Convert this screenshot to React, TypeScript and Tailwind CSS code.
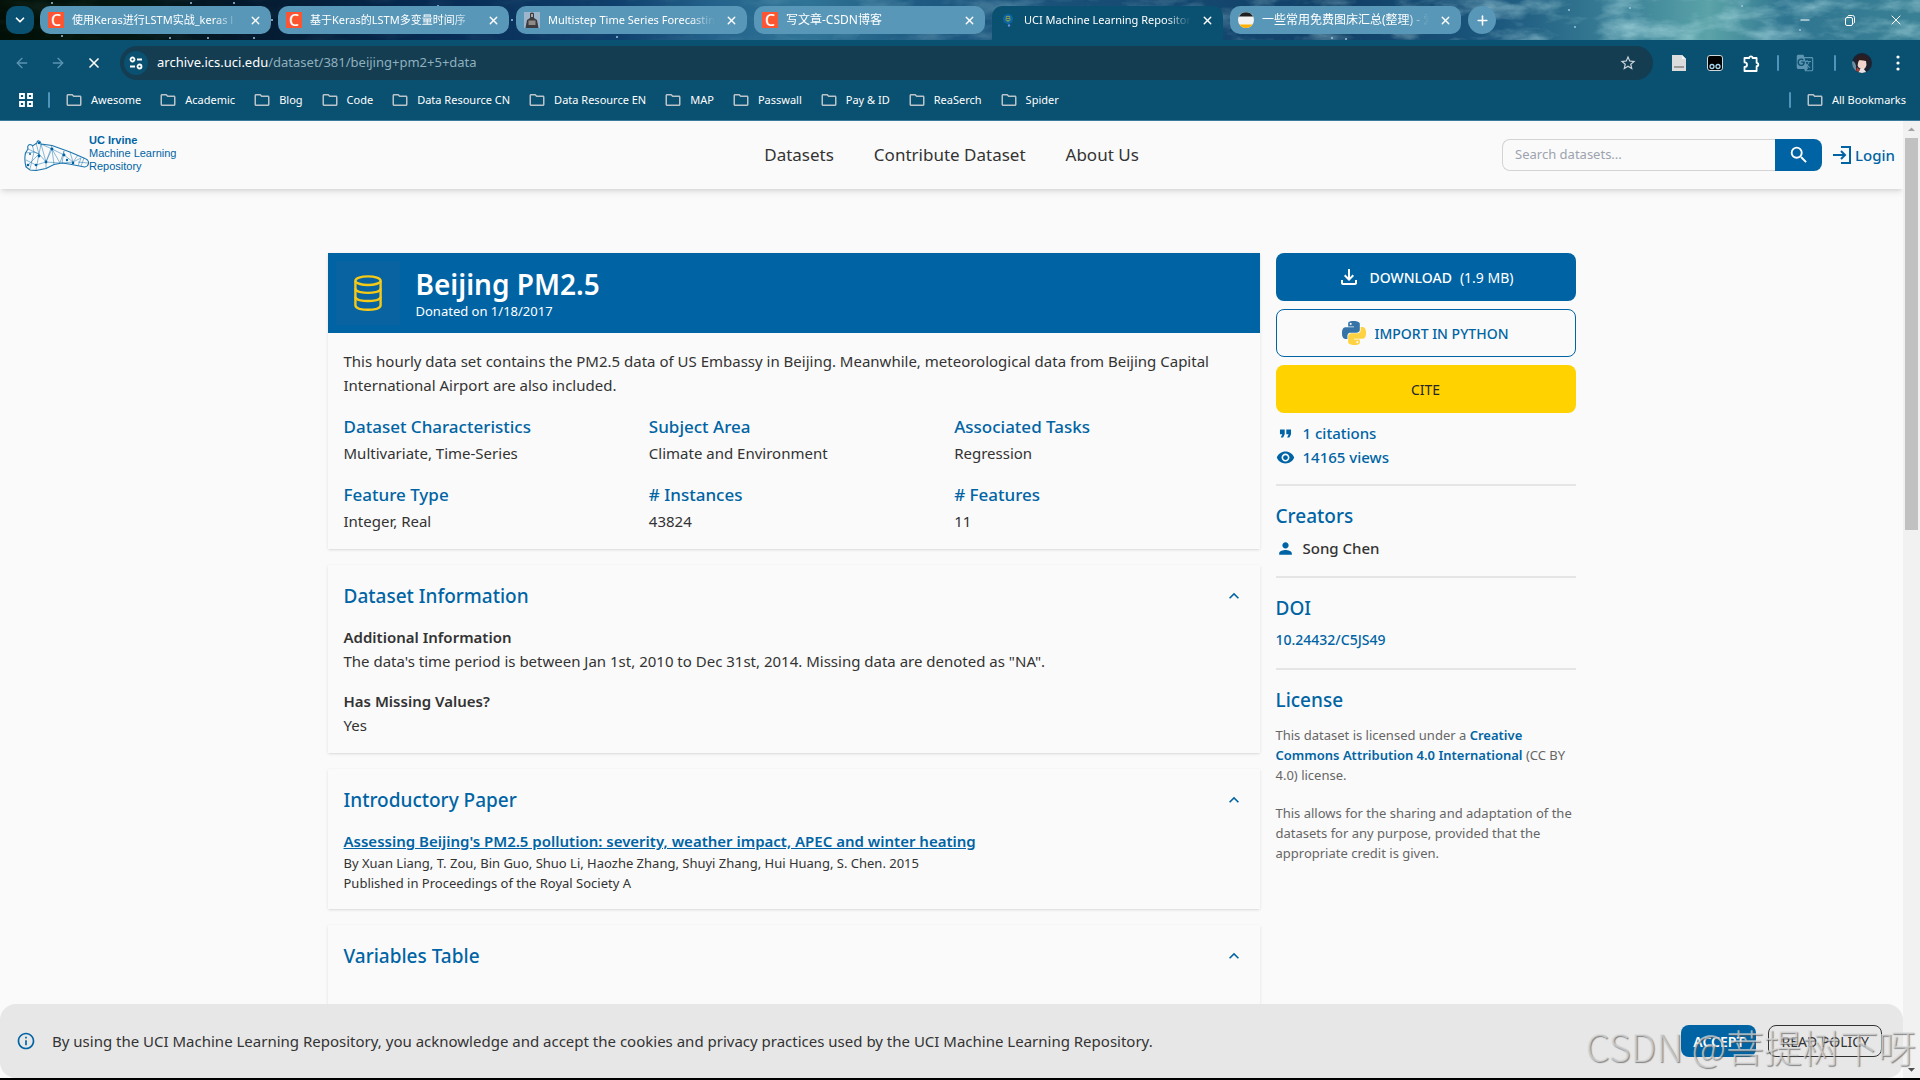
import React from 'react';
import {
  MdArrowDropDown,
  MdArrowDropUp,
  MdFormatQuote,
  MdGTranslate,
  MdKeyboardArrowUp,
  MdOutlineFileDownload,
  MdOutlineFolder,
  MdOutlineInfo,
  MdPerson,
  MdSearch,
  MdStarOutline,
  MdVisibility
} from 'react-icons/md';
import { ArrowLeft, ArrowRight, ChevronDown, Minus, Plus, X } from 'lucide-react';

type Favicon = 'csdn' | 'statue' | 'uci' | 'penguin';

interface Tab {
  id: number;
  title: string;
  icon: Favicon;
  size: string;
  active?: boolean;
}

const tabs: Tab[] = [
  { id: 1, title: '使用Keras进行LSTM实战_keras l', icon: 'csdn', size: 'text-[11px]' },
  { id: 2, title: '基于Keras的LSTM多变量时间序', icon: 'csdn', size: 'text-[11px]' },
  { id: 3, title: 'Multistep Time Series Forecastin', icon: 'statue', size: 'text-[11px]' },
  { id: 4, title: '写文章-CSDN博客', icon: 'csdn', size: 'text-[12px]' },
  { id: 5, title: 'UCI Machine Learning Repositor', icon: 'uci', size: 'text-[11px]', active: true },
  { id: 6, title: '一些常用免费图床汇总(整理) - 爱', icon: 'penguin', size: 'text-[12px]' }
];

const bookmarks = [
  'Awesome',
  'Academic',
  'Blog',
  'Code',
  'Data Resource CN',
  'Data Resource EN',
  'MAP',
  'Passwall',
  'Pay & ID',
  'ReaSerch',
  'Spider'
];

const navLinks = ['Datasets', 'Contribute Dataset', 'About Us'];

const facts = [
  { label: 'Dataset Characteristics', value: 'Multivariate, Time-Series' },
  { label: 'Subject Area', value: 'Climate and Environment' },
  { label: 'Associated Tasks', value: 'Regression' },
  { label: 'Feature Type', value: 'Integer, Real' },
  { label: '# Instances', value: '43824' },
  { label: '# Features', value: '11' }
];

// [x, y, radius]
const stars = [
  [52, 3, 1], [191, 3, 1], [234, 3, 1], [62, 36, 1], [170, 38, 1], [208, 38, 1], [254, 38, 1],
  [272, 20, 1], [378, 14, 1], [438, 6, 1], [512, 20, 1], [617, 37, 1], [1332, 38, 1], [1346, 39, 1],
  [1569, 10, 1], [1575, 27, 1], [1630, 8, 1], [1742, 6, 1], [1800, 30, 1]
];

function SkyBackground() {
  return (
    <svg className="absolute inset-0 h-full w-full" preserveAspectRatio="none" viewBox="0 0 1920 40" aria-hidden="true">
      <defs>
        <linearGradient id="sky">
          <stop offset="0" stopColor="#020f06" />
          <stop offset="0.06" stopColor="#03160f" />
          <stop offset="0.12" stopColor="#04182a" />
          <stop offset="0.22" stopColor="#072a52" />
          <stop offset="0.32" stopColor="#0f3f6c" />
          <stop offset="0.37" stopColor="#23618a" />
          <stop offset="0.42" stopColor="#2f7496" />
          <stop offset="0.48" stopColor="#1e5a82" />
          <stop offset="0.6" stopColor="#164a72" />
          <stop offset="0.7" stopColor="#103f66" />
          <stop offset="0.78" stopColor="#1c587e" />
          <stop offset="0.85" stopColor="#3d8499" />
          <stop offset="0.89" stopColor="#5ba3a8" />
          <stop offset="0.93" stopColor="#2f7590" />
          <stop offset="1" stopColor="#3a8095" />
        </linearGradient>
        <filter id="clouds" x="0" y="0" width="100%" height="100%">
          <feTurbulence type="fractalNoise" baseFrequency="0.02 0.05" numOctaves="5" seed="8" />
          <feColorMatrix values="0 0 0 0 0.55  0 0 0 0 0.85  0 0 0 0 0.88  1.6 0 0 0 -0.72" />
        </filter>
        <linearGradient id="cloudFade">
          <stop offset="0.3" stopColor="#fff" stopOpacity="0.1" />
          <stop offset="0.8" stopColor="#fff" stopOpacity="0.8" />
        </linearGradient>
        <mask id="cloudMask">
          <rect width="1920" height="40" fill="url(#cloudFade)" />
        </mask>
      </defs>
      <rect width="1920" height="40" fill="url(#sky)" />
      <g mask="url(#cloudMask)">
        <rect width="1920" height="40" filter="url(#clouds)" />
      </g>
      {stars.map(([x, y, r]) => (
        <circle key={`${x}-${y}`} cx={x} cy={y} r={r} fill="#9fc4dd" />
      ))}
    </svg>
  );
}

function TabIcon({ icon }: { icon: Favicon }) {
  if (icon === 'csdn') {
    return (
      <span className="flex h-4 w-4 shrink-0 items-center justify-center bg-[#fc5531] text-base leading-none font-medium text-white">
        C
      </span>
    );
  }
  if (icon === 'statue') {
    return (
      <svg className="h-4 w-4 shrink-0" viewBox="0 0 16 16" aria-hidden="true">
        <rect width="16" height="16" fill="#9db6cc" />
        <path d="M6 1.5Q8-.5 10 1.5V6l3 2 1.5 8h-13L3 8l3-2z" fill="#3b3b40" />
        <path d="M7 2h2v3H7z" fill="#a5a5a8" />
        <path d="M4.500 8.500h7v4.500h-7z" fill="#8f8a86" />
      </svg>
    );
  }
  if (icon === 'uci') {
    return (
      <svg className="h-4 w-4 shrink-0" viewBox="0 0 16 16" aria-hidden="true">
        <circle cx="8" cy="7" r="5" fill="#0d66a4" />
        <path d="M6 4h4l.5 4L8 10 5.500 8z" fill="#7d9a5a" />
        <path d="M6.500 5.500h3M6.500 7.500h3" stroke="#1d4d74" strokeWidth=".8" />
        <circle cx="9" cy="13.500" r="1.200" fill="#6b8fe0" />
      </svg>
    );
  }
  return (
    <svg className="h-4 w-4 shrink-0" viewBox="0 0 16 16" aria-hidden="true">
      <circle cx="8" cy="8" r="8" fill="#f2f2f0" />
      <path d="M.9 4.500a8 8 0 0 1 14.200 0z" fill="#1f2021" />
      <path d="M1.400 12.500a8 8 0 0 0 13.200 0z" fill="#ffb000" />
    </svg>
  );
}

function TabStrip() {
  return (
    <div className="relative h-10">
      <SkyBackground />
      <div className="relative flex h-full pl-1.5">
        <button
          type="button"
          aria-label="Search tabs"
          className="mt-1.5 flex h-7 w-7 items-center justify-center rounded-[10px] bg-[#0a5070] text-white"
        >
          <ChevronDown size={14} strokeWidth={3} />
        </button>
        <div className="ml-1.5 flex gap-[7px]">
          {tabs.map((tab) => (
            <div
              key={tab.id}
              className={
                tab.active
                  ? 'mt-1.5 flex w-[231px] items-start rounded-t-[10px] bg-[#0a5070] px-2'
                  : 'mt-1.5 flex h-7 w-[231px] items-start rounded-[10px] bg-[#5897b8] px-2'
              }
            >
              <div className="flex h-7 min-w-0 flex-1 items-center gap-2">
                <TabIcon icon={tab.icon} />
                <span
                  className={`min-w-0 flex-1 overflow-hidden mask-r-from-85% leading-4 whitespace-nowrap text-white ${tab.size}`}
                >
                  {tab.title}
                </span>
                <button type="button" aria-label="Close tab" className="flex w-4 justify-center text-white">
                  <X size={13} strokeWidth={2.5} />
                </button>
              </div>
            </div>
          ))}
        </div>
        <button
          type="button"
          aria-label="New tab"
          className="mt-1.5 ml-[7px] flex h-7 w-7 items-center justify-center rounded-full bg-[#5897b8] text-white"
        >
          <Plus size={15} strokeWidth={2.5} />
        </button>
        <div className="ml-auto flex items-center gap-8 pr-4 text-white">
          <button type="button" aria-label="Minimize">
            <Minus size={14} strokeWidth={2} />
          </button>
          <button type="button" aria-label="Restore">
            <svg width="12" height="12" viewBox="0 0 12 12" fill="none" stroke="currentColor" aria-hidden="true">
              <rect x="1.500" y="3.500" width="7" height="8" rx="1.500" />
              <path d="M3.500 2.500Q4 1.500 5 1.500h3.500a2 2 0 0 1 2 2V8q0 1-1 1.500" />
            </svg>
          </button>
          <button type="button" aria-label="Close window">
            <X size={16} strokeWidth={1.500} />
          </button>
        </div>
      </div>
    </div>
  );
}

function Toolbar() {
  return (
    <div className="flex h-[46px] items-center pr-5 pl-[14px] text-white">
      <button type="button" aria-label="Back" className="w-4 text-[#5c94b2]">
        <ArrowLeft size={16} />
      </button>
      <button type="button" aria-label="Forward" className="ml-5 w-4 text-[#5c94b2]">
        <ArrowRight size={16} />
      </button>
      <button type="button" aria-label="Stop loading" className="ml-5 w-4">
        <X size={16} strokeWidth={2.500} />
      </button>
      <div className="ml-[18px] flex h-[34px] flex-1 items-center rounded-full bg-[#143d52] pr-4 pl-1">
        <span className="flex h-6 w-6 items-center justify-center rounded-full bg-[#0a5070]">
          <svg width="14" height="14" viewBox="0 0 14 14" fill="none" stroke="currentColor" strokeWidth="1.800" aria-hidden="true">
            <circle cx="3.500" cy="3.500" r="2" />
            <path d="M8 3.500h5M1 10.500h5" />
            <circle cx="10.500" cy="10.500" r="2" />
          </svg>
        </span>
        <span className="ml-[9px] flex-1 text-[13px] text-[#8fb0be]">
          <span className="text-white">archive.ics.uci.edu</span>/dataset/381/beijing+pm2+5+data
        </span>
        <MdStarOutline size={18} className="text-[#c9d4da]" />
      </div>
      <div className="ml-4 flex items-center">
        <svg className="mx-[3px]" width="14" height="16" viewBox="0 0 14 16" aria-hidden="true">
          <path d="M0 0h10l4 4v12H0z" fill="#dcdcdc" />
          <path d="M10 0v4h4z" fill="#f6f6f6" />
          <path d="M2 11h10v2H2z" fill="#9a9a9a" />
        </svg>
        <svg className="ml-[18px]" width="16" height="16" viewBox="0 0 16 16" aria-hidden="true">
          <rect x=".5" y=".5" width="15" height="15" rx="2.500" fill="#000" stroke="#cfd8dc" />
          <circle cx="5" cy="11.500" r="2" fill="#000" stroke="#a8d8f0" strokeWidth="1.300" />
          <circle cx="11" cy="11.500" r="2" fill="#000" stroke="#a8d8f0" strokeWidth="1.300" />
        </svg>
        <svg className="ml-5" width="17" height="17" viewBox="0 0 17 17" fill="none" stroke="currentColor" strokeWidth="1.800" strokeLinejoin="round" aria-hidden="true">
          <path d="M1.500 3h4.700a1.700 1.700 0 0 1 3.400 0h4v4.800a1.700 1.700 0 0 1 0 3.400V16H1.500v-4q2.500 0 2.500-2.300T1.500 7.400z" />
        </svg>
        <span className="ml-[17px] h-4 w-0.5 rounded-full bg-[#4f95bb]" />
        <MdGTranslate size={18} className="ml-[17px] text-[#5c94b2]" />
        <span className="ml-5 h-4 w-0.5 rounded-full bg-[#4f95bb]" />
        <svg className="ml-4 rounded-full" width="20" height="20" viewBox="0 0 20 20" aria-hidden="true">
          <rect width="20" height="20" fill="#1d2230" />
          <path d="M0 8q3 0 4 5v7H0z" fill="#6d8ea0" />
          <path d="M6 8q4-3 8 0l.5 4q-1 4-4 4.500Q6 15 5.500 12z" fill="#f0d5cb" />
          <path d="M5 4q6-4 11 1l1 6-2-3-8-1-2 6z" fill="#2d1c20" />
          <path d="M8 16l3-1 4 5H6z" fill="#e9e4e4" />
          <path d="M5 14l3 3-2 2-2-1z" fill="#a3433c" />
        </svg>
        <svg className="ml-6" width="4" height="16" viewBox="0 0 4 16" fill="currentColor" aria-hidden="true">
          <circle cx="2" cy="2" r="1.600" />
          <circle cx="2" cy="8" r="1.600" />
          <circle cx="2" cy="14" r="1.600" />
        </svg>
      </div>
    </div>
  );
}

function BookmarkBar() {
  return (
    <nav className="flex h-[35px] items-center border-b border-[#3b7c9c] pb-[6px] pl-[19px] text-[11px] text-white">
      <svg width="14" height="14" viewBox="0 0 14 14" fill="none" stroke="currentColor" strokeWidth="1.800" aria-hidden="true">
        <path d="M1 1h4v4H1zM9 1h4v4H9zM1 9h4v4H1zM9 9h4v4H9z" />
      </svg>
      <span className="mx-[15px] h-4 w-0.5 rounded-full bg-[#4f95bb]" />
      <div className="flex gap-[18px]">
        {bookmarks.map((name) => (
          <a key={name} href="#" className="flex items-center gap-2 whitespace-nowrap">
            <MdOutlineFolder size={18} className="text-[#b9c3c8]" />
            {name}
          </a>
        ))}
      </div>
      <span className="mr-[15px] ml-auto h-4 w-0.5 rounded-full bg-[#4f95bb]" />
      <a href="#" className="flex items-center gap-2 pr-[14px] whitespace-nowrap">
        <MdOutlineFolder size={18} className="text-[#b9c3c8]" />
        All Bookmarks
      </a>
    </nav>
  );
}

function Logo() {
  return (
    <a href="#" className="ml-4 flex items-center">
      <svg width="65" height="31" viewBox="0 0 65 31" fill="none" stroke="#1a75ae" strokeWidth=".8" aria-hidden="true">
        <path strokeWidth="1.100" d="M2 27Q0 19 1.500 13L4 9Q3 5 6 4.500q2 0 2.500 1.500L13 3q0-2.500 2-2t2 3l11 1.500L46 12l15 6.500q4 1.500 3.500 5-.5 3-4 3.500L45 24l-7-1-8 1.500-8 4-10 2-6-.5z" />
        <path strokeWidth=".5" d="M4 9l11 5 2-10M1.500 13L10 12l5 2-3-11M15 14l-3 16M15 14L2 27M10 12L6 29M2 20l10 5 10-3M15 14l7 8M17 4l5 18 6-16.500M17 4l11 5M28 9l-6 13 14 1M28 9l8 14 4-12M40 11l-2 12 11-1M28 9l12 6M40 15l9 7-3-10M49 22l8-4M49 22l5-7M57 18l-3 8M60 18l-3 8M54 22l10 1M8.500 6l1.500 6M22 22v6M28 9l2 15.500" />
        <g fill="#0064a4" stroke="none">
          <circle cx="4" cy="25" r="1.300" />
          <circle cx="12" cy="25" r="1.300" />
          <circle cx="15" cy="16" r="1.400" />
          <circle cx="22" cy="22" r="1.400" />
          <circle cx="28" cy="9" r="1.400" />
          <circle cx="40" cy="15" r="1.400" />
          <circle cx="43" cy="20" r="1.200" />
          <circle cx="49" cy="23" r="1.300" />
          <circle cx="6" cy="14" r="1" />
          <circle cx="15" cy="3" r="1.200" />
        </g>
      </svg>
      <span className="pb-[3px] font-['Liberation_Sans',sans-serif] text-[11px] leading-[13px] text-[#0064a4]">
        <b className="block">UC Irvine</b>
        <span className="block">Machine Learning</span>
        <span className="block">Repository</span>
      </span>
    </a>
  );
}

function SiteHeader() {
  return (
    <header className="relative flex h-[68px] items-center bg-[#fafafa] px-2 shadow-md">
      <div className="flex-1">
        <Logo />
      </div>
      <nav className="flex gap-10 text-[17px] text-[#333]">
        {navLinks.map((link) => (
          <a key={link} href="#" className="whitespace-nowrap">
            {link}
          </a>
        ))}
      </nav>
      <div className="flex flex-1 items-center justify-end">
        <form className="flex h-8">
          <input
            type="text"
            aria-label="Search datasets"
            placeholder="Search datasets..."
            className="w-[273px] rounded-l-lg border border-r-0 border-[#d4d4d4] bg-transparent px-3 text-[13px] text-[#333] placeholder:text-[#9ca3af]"
          />
          <button
            type="button"
            aria-label="Search"
            className="flex w-[47px] items-center justify-center rounded-r-lg bg-[#0064a4] text-white"
          >
            <MdSearch size={22} />
          </button>
        </form>
        <a href="#" className="ml-[11px] flex items-center gap-1 text-[15px] font-medium text-[#0064a4]">
          <svg width="18" height="18" viewBox="0 0 18 18" fill="none" stroke="currentColor" strokeWidth="2" aria-hidden="true">
            <path d="M8 1h9v16H8M0 9h11M8 5l4 4-4 4" />
          </svg>
          Login
        </a>
      </div>
    </header>
  );
}

function Summary() {
  return (
    <section className="shadow">
      <div className="flex h-20 items-center bg-[#0064a4] px-2 text-white">
        <div className="flex h-16 w-16 items-center justify-center bg-[#0963a1]">
          <svg width="28" height="36" viewBox="0 0 28 36" fill="none" stroke="#f5c916" strokeWidth="2.400" aria-hidden="true">
            <ellipse cx="14" cy="5.700" rx="12.600" ry="4.300" />
            <path d="M1.400 5.700v24.600q0 2.400 4 3.500 8.600 1.800 17.200 0 4-1.100 4-3.500V5.700" />
            <path d="M1.400 13.500q0 2.300 4 3.400 8.600 1.900 17.200 0 4-1.100 4-3.400M1.400 21.700q0 2.300 4 3.400 8.600 1.900 17.200 0 4-1.100 4-3.400" />
          </svg>
        </div>
        <div className="ml-4">
          <h1 className="text-[28px] leading-9 font-semibold">Beijing PM2.5</h1>
          <h2 className="text-[13px] leading-[18px]">Donated on 1/18/2017</h2>
        </div>
      </div>
      <div className="p-4">
        <p className="leading-6">
          This hourly data set contains the PM2.5 data of US Embassy in Beijing. Meanwhile, meteorological data from Beijing
          Capital International Airport are also included.
        </p>
        <div className="mt-4 grid grid-cols-3 gap-4">
          {facts.map((fact) => (
            <div key={fact.label}>
              <h3 className="text-[17px] leading-7 font-medium text-[#0064a4]">{fact.label}</h3>
              <p className="leading-6">{fact.value}</p>
            </div>
          ))}
        </div>
      </div>
    </section>
  );
}

function Panel({ title, children }: { title: string; children?: React.ReactNode }) {
  return (
    <section className="p-4 shadow">
      <div className="flex h-[30px] items-center justify-between text-[#0064a4]">
        <h2 className="text-[19px] font-medium">{title}</h2>
        <button type="button" aria-label={`Collapse ${title}`}>
          <MdKeyboardArrowUp size={20} />
        </button>
      </div>
      <div className="mt-[14px]">{children}</div>
    </section>
  );
}

function PythonIcon() {
  return (
    <svg width="24" height="24" viewBox="0 0 24 24" aria-hidden="true">
      <path
        fill="#3674a8"
        d="M14.25.18l.9.2.73.26.59.3.45.32.34.34.25.34.16.33.1.3.04.26.02.2-.01.13V8.5l-.05.63-.13.55-.21.46-.26.38-.3.31-.33.25-.35.19-.35.14-.33.1-.3.07-.26.04-.21.02H8.77l-.69.05-.59.14-.5.22-.41.27-.33.32-.27.35-.2.36-.15.37-.1.35-.07.32-.04.27-.02.21v3.06H3.17l-.21-.03-.28-.07-.32-.12-.35-.18-.36-.26-.36-.36-.35-.46-.32-.59-.28-.73-.21-.88-.14-1.05-.05-1.23.06-1.22.16-1.04.24-.87.32-.71.36-.57.4-.44.42-.33.42-.24.4-.16.36-.1.32-.05.24-.01h.16l.06.01h8.16v-.83H6.18l-.01-2.75-.02-.37.05-.34.11-.31.17-.28.25-.26.31-.23.38-.2.44-.18.51-.15.58-.12.64-.1.71-.06.77-.04.84-.02 1.27.05zm-6.3 1.98l-.23.33-.08.41.08.41.23.34.33.22.41.09.41-.09.33-.22.23-.34.08-.41-.08-.41-.23-.33-.33-.22-.41-.09-.41.09z"
      />
      <path
        fill="#ffd242"
        d="M21.04 6.11l.28.06.32.12.35.18.36.27.36.35.35.47.32.59.28.73.21.88.14 1.04.05 1.23-.06 1.23-.16 1.04-.24.86-.32.71-.36.57-.4.45-.42.33-.42.24-.4.16-.36.09-.32.05-.24.02-.16-.01h-8.22v.82h5.84l.01 2.76.02.36-.05.34-.11.31-.17.29-.25.25-.31.24-.38.2-.44.17-.51.15-.58.13-.64.09-.71.07-.77.04-.84.01-1.27-.04-1.07-.14-.9-.2-.73-.25-.59-.3-.45-.33-.34-.34-.25-.34-.16-.33-.1-.3-.04-.25-.02-.2.01-.13v-5.34l.05-.64.13-.54.21-.46.26-.38.3-.32.33-.24.35-.2.35-.14.33-.1.3-.06.26-.04.21-.02.13-.01h5.84l.69-.05.59-.14.5-.21.41-.28.33-.32.27-.35.2-.36.15-.36.1-.35.07-.32.04-.28.02-.21V6.07h2.09l.14.01zm-6.47 14.25l-.23.33-.08.41.08.41.23.33.33.23.41.08.41-.08.33-.23.23-.33.08-.41-.08-.41-.23-.33-.33-.23-.41-.08-.41.08z"
      />
    </svg>
  );
}

function Sidebar() {
  return (
    <aside className="col-span-3">
      <div className="flex flex-col gap-2 text-[14px]">
        <button type="button" className="flex h-12 items-center justify-center rounded-lg bg-[#0064a4] text-white">
          <MdOutlineFileDownload size={24} />
          <span className="ml-2 font-medium">DOWNLOAD</span>
          <span className="ml-2">(1.9 MB)</span>
        </button>
        <button
          type="button"
          className="flex h-12 items-center justify-center gap-2 rounded-lg border border-[#0064a4] font-medium text-[#0064a4]"
        >
          <PythonIcon />
          IMPORT IN PYTHON
        </button>
        <button type="button" className="h-12 rounded-lg bg-[#ffd200] text-[#262626]">
          CITE
        </button>
      </div>
      <div className="mt-2 font-medium text-[#0064a4]">
        <p className="flex h-6 items-center gap-2">
          <MdFormatQuote size={19} />
          1 citations
        </p>
        <p className="flex h-6 items-center gap-2">
          <MdVisibility size={19} />
          14165 views
        </p>
      </div>
      <hr className="mt-[15px] border-t-2 border-[#e5e5e5]" />
      <h2 className="mt-[14px] text-[19px] leading-8 font-medium text-[#0064a4]">Creators</h2>
      <p className="mt-1 flex h-6 items-center gap-2 font-medium">
        <MdPerson size={19} className="text-[#0064a4]" />
        Song Chen
      </p>
      <hr className="mt-4 border-t-2 border-[#e5e5e5]" />
      <h2 className="mt-[14px] text-[19px] leading-8 font-medium text-[#0064a4]">DOI</h2>
      <a href="#" className="mt-1 block text-[14px] leading-6 font-medium text-[#0064a4]">
        10.24432/C5JS49
      </a>
      <hr className="mt-4 border-t-2 border-[#e5e5e5]" />
      <h2 className="mt-[14px] text-[19px] leading-8 font-medium text-[#0064a4]">License</h2>
      <div className="mt-[9px] text-[13px] leading-5 text-[#666]">
        <p>
          This dataset is licensed under a{' '}
          <a href="#" className="font-semibold text-[#0064a4]">
            Creative Commons Attribution 4.0 International
          </a>{' '}
          (CC BY 4.0) license.
        </p>
        <p className="mt-[18px]">
          This allows for the sharing and adaptation of the datasets for any purpose, provided that the appropriate credit
          is given.
        </p>
      </div>
    </aside>
  );
}

function CookieBanner() {
  return (
    <div className="absolute inset-x-0 bottom-0 flex items-center rounded-2xl bg-[#e7e7e7] py-[21px] pr-[21px] pl-4 text-[#333]">
      <MdOutlineInfo size={20} className="text-[#0064a4]" />
      <p className="ml-4 flex-1">
        By using the UCI Machine Learning Repository, you acknowledge and accept the cookies and privacy practices used by
        the UCI Machine Learning Repository.
      </p>
      <button type="button" className="h-8 rounded-lg bg-[#0064a4] px-3 text-[14px] font-semibold text-white">
        ACCEPT
      </button>
      <button type="button" className="ml-3 h-8 rounded-lg border border-[#333] px-3 text-[14px]">
        READ POLICY
      </button>
    </div>
  );
}

function Scrollbar() {
  return (
    <div className="flex w-[17px] shrink-0 flex-col items-center bg-[#f1f1f1]">
      <MdArrowDropUp size={17} className="shrink-0 text-[#a3a3a3]" />
      <div className="h-[41%] w-[13px] bg-[#c1c1c1]" />
      <MdArrowDropDown size={17} className="mt-auto shrink-0 text-[#505050]" />
    </div>
  );
}

export default function App() {
  return (
    <div className="relative flex h-screen flex-col overflow-hidden bg-black pb-0.5 font-['Noto_Sans','Noto_Sans_CJK_SC',sans-serif] text-[15px]">
      <div className="shrink-0 bg-[#0a5070]">
        <TabStrip />
        <Toolbar />
        <BookmarkBar />
      </div>
      <div className="flex min-h-0 flex-1">
        <div className="relative min-w-0 flex-1 overflow-hidden bg-[#fafafa] text-[#333]">
          <SiteHeader />
          <main className="mx-auto grid max-w-[1280px] grid-cols-12 gap-4 px-4 pt-16">
            <div className="col-span-9 flex flex-col gap-4">
              <Summary />
              <Panel title="Dataset Information">
                <p className="leading-6 font-semibold">Additional Information</p>
                <p className="leading-6">
                  The data's time period is between Jan 1st, 2010 to Dec 31st, 2014. Missing data are denoted as "NA".
                </p>
                <p className="mt-4 leading-6 font-semibold">Has Missing Values?</p>
                <p className="leading-6">Yes</p>
              </Panel>
              <Panel title="Introductory Paper">
                <a href="#" className="block leading-6 font-semibold text-[#0064a4] underline">
                  Assessing Beijing's PM2.5 pollution: severity, weather impact, APEC and winter heating
                </a>
                <p className="text-[13px] leading-5">
                  By Xuan Liang, T. Zou, Bin Guo, Shuo Li, Haozhe Zhang, Shuyi Zhang, Hui Huang, S. Chen. 2015
                </p>
                <p className="text-[13px] leading-5">Published in Proceedings of the Royal Society A</p>
              </Panel>
              <Panel title="Variables Table">
                <div className="h-40" />
              </Panel>
            </div>
            <Sidebar />
          </main>
          <CookieBanner />
        </div>
        <Scrollbar />
      </div>
      <p className="pointer-events-none absolute right-1 bottom-2 font-['Noto_Sans_CJK_SC',sans-serif] text-[38px] leading-[52px] font-light whitespace-nowrap text-[#dcdcdc]/70 [text-shadow:1px_1px_1px_rgb(90_90_90/0.7)]">
        CSDN @菩提树下呀
      </p>
    </div>
  );
}
